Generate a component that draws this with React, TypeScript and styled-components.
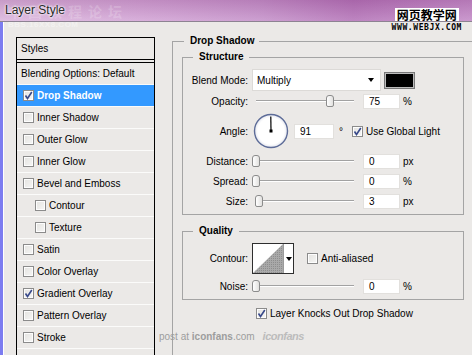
import styled, { createGlobalStyle } from "styled-components";

const GlobalStyle = createGlobalStyle`
  html, body { margin: 0; padding: 0; }
  body {
    width: 472px;
    height: 355px;
    overflow: hidden;
    background: #ebe9e7;
    font-family: "Liberation Sans", Arial, sans-serif;
    font-size: 10px;
    color: #000;
  }
`;

const Window = styled.div`
  position: relative;
  width: 472px;
  height: 355px;
  overflow: hidden;
  display: flex;
  flex-direction: column;
`;

const TitleBar = styled.header`
  position: relative;
  flex: none;
  height: 21px;
  border-bottom: 1px solid #8d8392;
  background:
    linear-gradient(180deg, rgba(110, 30, 100, 0.18) 0%, rgba(255, 255, 255, 0.12) 100%),
    linear-gradient(90deg, #dcb8de 0%, #d3a5d6 30%, #c693cb 55%, #b575b9 75%, #c48cc8 100%);

  h1 {
    position: relative;
    z-index: 1;
    margin: 0;
    padding-left: 5px;
    font: normal 12px/21px "Liberation Sans", Arial, sans-serif;
    color: #2a2a2a;
    text-shadow: 0 0 3px #fff, 0 0 2px #fff;
  }
`;

const FaintMark = styled.span`
  position: absolute;
  left: 8px;
  top: 4px;
  font: bold 14px/14px "Noto Sans CJK SC", sans-serif;
  letter-spacing: 6px;
  color: rgba(255, 255, 255, 0.2);
  pointer-events: none;

  small {
    display: block;
    margin-top: 3px;
    font: bold 8px/8px "Liberation Sans", sans-serif;
    letter-spacing: 0.5px;
    color: rgba(255, 255, 255, 0.4);
  }
`;

const SiteBadge = styled.div`
  position: absolute;
  right: 10px;
  top: 8px;
  display: flex;
  flex-direction: column;
  align-items: center;
  gap: 3px;
  z-index: 2;

  b {
    background: #fff;
    padding: 0 2px;
    font: bold 12px/13px "Noto Sans CJK SC", sans-serif;
    color: #000;
  }
  i {
    font: bold 8px/8px "DejaVu Sans Mono", monospace;
    font-style: normal;
    letter-spacing: 0.6px;
    color: #000;
  }
`;

const Body = styled.main`
  flex: 1;
  display: flex;
  align-items: flex-start;
  border-left: 3px solid #7c7cf0;
  box-shadow: inset 1px 0 #fff;
  padding: 15px 0 0 13px;
  background: #ebe9e7;
`;

const StyleList = styled.nav`
  flex: none;
  box-sizing: border-box;
  width: 139px;
  height: 330px;
  border: 1px solid #000;
  background: #ebe9e7;
`;

const ListHeader = styled.div`
  height: 21px;
  line-height: 21px;
  padding-left: 4px;
  border-bottom: 1px solid #000;
`;

const ListBody = styled.div`
  margin-top: 2px;
  border-top: 1px solid #000;
`;

const StyleRow = styled.div<{ $selected?: boolean; $indent?: number }>`
  box-sizing: border-box;
  display: flex;
  align-items: center;
  gap: 3px;
  height: 22px;
  padding-left: ${(p) => p.$indent ?? 6}px;
  border-bottom: 1px solid #fbfbfa;
  background: ${(p) => (p.$selected ? "#3399ff" : "transparent")};
  color: ${(p) => (p.$selected ? "#fff" : "#000")};
  font-weight: ${(p) => (p.$selected ? "bold" : "normal")};
  white-space: nowrap;
`;

const Box = styled.span<{ $checked?: boolean }>`
  flex: none;
  box-sizing: border-box;
  display: inline-flex;
  align-items: center;
  justify-content: center;
  width: 11px;
  height: 11px;
  border: 1px solid #8b8b8b;
  background: linear-gradient(135deg, #e4e3e0 0%, #f6f6f5 100%);
  box-shadow: inset 0 0 0 1px #fdfdfd;

  svg {
    display: block;
  }
`;

const Check = ({ checked }: { checked?: boolean }) => (
  <Box $checked={checked}>
    {checked && (
      <svg width="9" height="9" viewBox="0 0 9 9">
        <path d="M1.5 4.5 L3.5 7.5 L7.8 1" fill="none" stroke="#38498a" strokeWidth="1.6" />
      </svg>
    )}
  </Box>
);

const Panel = styled.section`
  position: relative;
  flex: none;
  margin: -2px 0 0 17px;
`;

const Group = styled.fieldset<{ $outer?: boolean }>`
  box-sizing: border-box;
  margin: 0;
  width: ${(p) => (p.$outer ? "320px" : "282px")};
  min-width: 0;
  border: 1px solid #a4a4a4;
  border-right: ${(p) => (p.$outer ? "none" : "1px solid #a4a4a4")};
  border-bottom: ${(p) => (p.$outer ? "none" : "1px solid #a4a4a4")};
  padding: ${(p) => (p.$outer ? "4px 0 0 9px" : "6px 0 3px 0")};
  height: ${(p) => (p.$outer ? "330px" : "auto")};

  & + & {
    margin-top: 10px;
  }
`;

const Legend = styled.legend<{ $outer?: boolean }>`
  font-weight: bold;
  line-height: 12px;
  margin-left: ${(p) => (p.$outer ? 2 : 10)}px;
  padding: ${(p) => (p.$outer ? "0 5px 0 6px" : "0 6px")};
`;

const Row = styled.div<{ $h: number; $top?: number }>`
  display: flex;
  align-items: center;
  height: ${(p) => p.$h}px;
  margin-top: ${(p) => p.$top ?? 0}px;
  white-space: nowrap;
`;

const Label = styled.span`
  flex: none;
  width: 65px;
  text-align: right;
`;

const Select = styled.div`
  box-sizing: border-box;
  display: flex;
  align-items: center;
  justify-content: space-between;
  width: 129px;
  height: 22px;
  margin-left: 4px;
  padding: 0 6px 0 4px;
  background: #fff;
  border: 1px solid #dcdad7;
`;

const Arrow = styled.span`
  width: 0;
  height: 0;
  border-left: 3px solid transparent;
  border-right: 3px solid transparent;
  border-top: 4px solid #000;
`;

const Swatch = styled.span`
  box-sizing: border-box;
  width: 31px;
  height: 17px;
  margin-left: 3px;
  border: 1px solid #777;
  box-shadow: inset 0 0 0 1px #bcbcbc;
  background: #000;
`;

const Slider = styled.div`
  position: relative;
  flex: none;
  width: 98px;
  height: 14px;
  margin-left: 8px;

  &::before {
    content: "";
    position: absolute;
    left: 0;
    right: 0;
    top: 6px;
    height: 1px;
    background: #a2a2a2;
    box-shadow: 0 1px #fff;
  }
`;

const Thumb = styled.span<{ $pos: number }>`
  position: absolute;
  top: 1px;
  left: ${(p) => p.$pos}%;
  box-sizing: border-box;
  width: 8px;
  height: 12px;
  margin-left: -4px;
  border: 1px solid #8c8c8c;
  border-radius: 3px 3px 2px 2px;
  background: linear-gradient(90deg, #fff 0%, #e2e1df 100%);
`;

const Field = styled.span<{ $w?: number; $gap?: number }>`
  box-sizing: border-box;
  flex: none;
  width: ${(p) => p.$w ?? 37}px;
  height: 15px;
  line-height: 14px;
  margin-left: ${(p) => p.$gap ?? 9}px;
  padding-left: 5px;
  background: #fff;
  border: 1px solid #e2e0dd;
`;

const Unit = styled.span<{ $gap?: number }>`
  margin-left: ${(p) => p.$gap ?? 3}px;
`;

const Dial = styled.svg`
  flex: none;
  margin-left: 5px;
  display: block;
`;

const ContourBox = styled.div`
  box-sizing: border-box;
  display: flex;
  width: 42px;
  height: 31px;
  margin-left: 4px;
  border: 1px solid #2e2e2e;
  background: #fff;

  svg {
    display: block;
  }
`;

const ContourDrop = styled.span`
  display: flex;
  align-items: center;
  justify-content: center;
  flex: 1;
  border-left: 1px solid #9a9a9a;
`;

const CheckLabel = styled.label<{ $gap?: number }>`
  display: flex;
  align-items: center;
  gap: 3px;
  margin-left: ${(p) => p.$gap ?? 0}px;
`;

const Watermark = styled.div`
  position: absolute;
  left: 159px;
  top: 330px;
  display: flex;
  align-items: baseline;
  gap: 8px;
  color: #9d9d9d;
  font-size: 10px;

  b {
    font-weight: bold;
  }
  em {
    font: italic bold 11px "Liberation Sans", sans-serif;
    letter-spacing: -0.5px;
    color: #bcbcbc;
  }
`;

const styles: { name: string; checked?: boolean; sub?: boolean; selected?: boolean }[] = [
  { name: "Drop Shadow", checked: true, selected: true },
  { name: "Inner Shadow" },
  { name: "Outer Glow" },
  { name: "Inner Glow" },
  { name: "Bevel and Emboss" },
  { name: "Contour", sub: true },
  { name: "Texture", sub: true },
  { name: "Satin" },
  { name: "Color Overlay" },
  { name: "Gradient Overlay", checked: true },
  { name: "Pattern Overlay" },
  { name: "Stroke" },
  { name: "" },
];

const sliders = [
  { label: "Distance:", value: 0, unit: "px" },
  { label: "Spread:", value: 0, unit: "%" },
  { label: "Size:", value: 3, unit: "px" },
];

export default function App() {
  return (
    <Window>
      <GlobalStyle />
      <TitleBar>
        <FaintMark>
          中国教程论坛
          <small>BBS.16XX8.COM</small>
        </FaintMark>
        <h1>Layer Style</h1>
      </TitleBar>
      <SiteBadge>
        <b>网页教学网</b>
        <i>WWW.WEBJX.COM</i>
      </SiteBadge>

      <Body>
        <StyleList>
          <ListHeader>Styles</ListHeader>
          <ListBody>
            <StyleRow $indent={4}>Blending Options: Default</StyleRow>
            {styles.map((s, i) => (
              <StyleRow key={i} $selected={s.selected} $indent={s.sub ? 18 : 6}>
                {s.name && <Check checked={s.checked} />}
                {s.name}
              </StyleRow>
            ))}
          </ListBody>
        </StyleList>

        <Panel>
          <Group $outer>
            <Legend $outer>Drop Shadow</Legend>

            <Group>
              <Legend>Structure</Legend>
              <Row $h={22}>
                <Label>Blend Mode:</Label>
                <Select>
                  Multiply
                  <Arrow />
                </Select>
                <Swatch />
              </Row>
              <Row $h={20}>
                <Label>Opacity:</Label>
                <Slider>
                  <Thumb $pos={75} />
                </Slider>
                <Field>75</Field>
                <Unit>%</Unit>
              </Row>
              <Row $h={40}>
                <Label>Angle:</Label>
                <Dial width="36" height="36" viewBox="0 0 36 36">
                  <defs>
                    <radialGradient id="dialFill" cx="50%" cy="50%" r="50%">
                      <stop offset="0.8" stopColor="#ffffff" />
                      <stop offset="1" stopColor="#e4e6ee" />
                    </radialGradient>
                  </defs>
                  <circle cx="18" cy="18" r="16.5" fill="url(#dialFill)" stroke="#5d6c98" strokeWidth="1.4" />
                  <line x1="18" y1="18" x2="17.8" y2="3.5" stroke="#000" strokeWidth="1.2" />
                  <rect x="16.5" y="16.5" width="3" height="3" fill="#000" />
                </Dial>
                <Field $w={40} $gap={5}>91</Field>
                <Unit $gap={5}>°</Unit>
                <CheckLabel $gap={9}>
                  <Check checked />
                  Use Global Light
                </CheckLabel>
              </Row>
              {sliders.map((s) => (
                <Row $h={20} key={s.label}>
                  <Label>{s.label}</Label>
                  <Slider>
                    <Thumb $pos={s.value} />
                  </Slider>
                  <Field>{s.value}</Field>
                  <Unit>{s.unit}</Unit>
                </Row>
              ))}
            </Group>

            <Group>
              <Legend>Quality</Legend>
              <Row $h={31}>
                <Label>Contour:</Label>
                <ContourBox>
                  <svg width="30" height="29" viewBox="0 0 30 29">
                    <defs>
                      <pattern id="dots" width="2" height="2" patternUnits="userSpaceOnUse">
                        <rect width="2" height="2" fill="#a9a9a9" />
                        <rect width="1" height="1" fill="#8e8e8e" />
                      </pattern>
                    </defs>
                    <polygon points="0,29 30,0 30,29" fill="url(#dots)" />
                  </svg>
                  <ContourDrop>
                    <Arrow />
                  </ContourDrop>
                </ContourBox>
                <CheckLabel $gap={13}>
                  <Check />
                  Anti-aliased
                </CheckLabel>
              </Row>
              <Row $h={20} $top={2}>
                <Label>Noise:</Label>
                <Slider>
                  <Thumb $pos={0} />
                </Slider>
                <Field>0</Field>
                <Unit>%</Unit>
              </Row>
            </Group>

            <Row $h={18} $top={4}>
              <CheckLabel $gap={74}>
                <Check checked />
                Layer Knocks Out Drop Shadow
              </CheckLabel>
            </Row>
          </Group>
        </Panel>
      </Body>

      <Watermark>
        <span>
          post at <b>iconfans</b>.com
        </span>
        <em>iconfans</em>
      </Watermark>
    </Window>
  );
}
